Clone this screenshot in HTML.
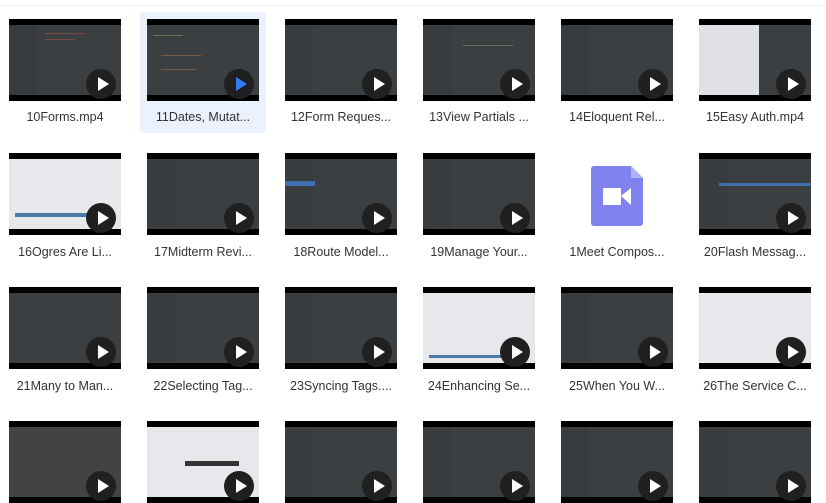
<!DOCTYPE html>
<html><head><meta charset="utf-8"><style>
body{margin:0;width:826px;height:497px;overflow:hidden;background:#fff;font-family:"Liberation Sans","Noto Sans CJK SC",sans-serif;position:relative}
.line{position:absolute;left:0;top:5px;width:826px;height:1px;background:#eef0f3}
.sel{position:absolute;left:140px;top:12px;width:126px;height:121px;background:#ebf1fd;border-radius:3px}
.t{position:absolute;width:112px;height:82px;background:#000;overflow:hidden}
.c{position:absolute;left:0;top:6px;width:112px;height:70px;background:#3c3f41}
.c.side:before{content:"";position:absolute;left:0;top:0;width:28px;height:70px;background:#393c3e}
.c .ln{position:absolute;height:1px;background:#6a6f5a}
.l{background:#e6e8eb}
.p{position:absolute;left:77px;top:50px;width:30px;height:30px;border-radius:50%;background:#202020}
.p:after{content:"";position:absolute;left:12px;top:8px;border-left:11px solid #fff;border-top:7px solid transparent;border-bottom:7px solid transparent}
.p.b:after{border-left-color:#2f7cf6}
.lab{position:absolute;width:126px;text-align:center;font-size:12.5px;color:#333;white-space:nowrap}
</style></head><body>
<div class="line"></div>
<div class="sel"></div>

<div class="t" style="left:9px;top:19px"><div class="c side"><div class="ln" style="left:36px;top:8px;width:40px;background:#7a4a40"></div><div class="ln" style="left:36px;top:14px;width:30px;background:#7a4a40"></div></div><div class="p"></div></div>
<div class="t" style="left:147px;top:19px"><div class="c"><div class="ln" style="left:6px;top:10px;width:30px"></div><div class="ln" style="left:14px;top:30px;width:40px;background:#7a5a40"></div><div class="ln" style="left:14px;top:44px;width:36px;background:#7a5a40"></div></div><div class="p b"></div></div>
<div class="t" style="left:285px;top:19px"><div class="c side"></div><div class="p"></div></div>
<div class="t" style="left:423px;top:19px"><div class="c side"><div class="ln" style="left:40px;top:20px;width:50px"></div></div><div class="p"></div></div>
<div class="t" style="left:561px;top:19px"><div class="c side"></div><div class="p"></div></div>
<div class="t" style="left:699px;top:19px"><div class="c" style="background:#dfe1e4"><div style="position:absolute;left:60px;top:0;width:52px;height:70px;background:#3c3f41"></div></div><div class="p"></div></div>
<div class="lab" style="left:2px;top:110px">10Forms.mp4</div>
<div class="lab" style="left:140px;top:110px">11Dates, Mutat...</div>
<div class="lab" style="left:278px;top:110px">12Form Reques...</div>
<div class="lab" style="left:416px;top:110px">13View Partials ...</div>
<div class="lab" style="left:554px;top:110px">14Eloquent Rel...</div>
<div class="lab" style="left:692px;top:110px">15Easy Auth.mp4</div>

<div class="t" style="left:9px;top:153px"><div class="c l"><div style="position:absolute;left:6px;top:54px;width:100px;height:4px;background:#4a79a8"></div></div><div class="p"></div></div>
<div class="t" style="left:147px;top:153px"><div class="c side"></div><div class="p"></div></div>
<div class="t" style="left:285px;top:153px"><div class="c side"><div style="position:absolute;left:0;top:22px;width:30px;height:5px;background:#3e6db0"></div></div><div class="p"></div></div>
<div class="t" style="left:423px;top:153px"><div class="c side"></div><div class="p"></div></div>
<svg style="position:absolute;left:591px;top:166px" width="52" height="60" viewBox="0 0 52 60"><path d="M3 0H40L52 12V57a3 3 0 0 1-3 3H3a3 3 0 0 1-3-3V3a3 3 0 0 1 3-3z" fill="#8083ee"/><path d="M40 0V12H52z" fill="#b0b4f6"/><rect x="12" y="22" width="18" height="17" rx="1" fill="#fff"/><path d="M30 30L40 22V39z" fill="#fff"/></svg>
<div class="t" style="left:699px;top:153px"><div class="c side"><div style="position:absolute;left:20px;top:24px;width:92px;height:3px;background:#3e6db0"></div></div><div class="p"></div></div>
<div class="lab" style="left:2px;top:245px">16Ogres Are Li...</div>
<div class="lab" style="left:140px;top:245px">17Midterm Revi...</div>
<div class="lab" style="left:278px;top:245px">18Route Model...</div>
<div class="lab" style="left:416px;top:245px">19Manage Your...</div>
<div class="lab" style="left:554px;top:245px">1Meet Compos...</div>
<div class="lab" style="left:692px;top:245px">20Flash Messag...</div>

<div class="t" style="left:9px;top:287px"><div class="c"></div><div class="p"></div></div>
<div class="t" style="left:147px;top:287px"><div class="c side"></div><div class="p"></div></div>
<div class="t" style="left:285px;top:287px"><div class="c side"></div><div class="p"></div></div>
<div class="t" style="left:423px;top:287px"><div class="c l"><div style="position:absolute;left:6px;top:62px;width:100px;height:3px;background:#4a79a8"></div></div><div class="p"></div></div>
<div class="t" style="left:561px;top:287px"><div class="c side"></div><div class="p"></div></div>
<div class="t" style="left:699px;top:287px"><div class="c l"></div><div class="p"></div></div>
<div class="lab" style="left:2px;top:379px">21Many to Man...</div>
<div class="lab" style="left:140px;top:379px">22Selecting Tag...</div>
<div class="lab" style="left:278px;top:379px">23Syncing Tags....</div>
<div class="lab" style="left:416px;top:379px">24Enhancing Se...</div>
<div class="lab" style="left:554px;top:379px">25When You W...</div>
<div class="lab" style="left:692px;top:379px">26The Service C...</div>

<div class="t" style="left:9px;top:421px"><div class="c" style="background:#424344"></div><div class="p"></div></div>
<div class="t" style="left:147px;top:421px"><div class="c l"><div style="position:absolute;left:38px;top:34px;width:54px;height:5px;background:#333"></div></div><div class="p"></div></div>
<div class="t" style="left:285px;top:421px"><div class="c side"></div><div class="p"></div></div>
<div class="t" style="left:423px;top:421px"><div class="c side"></div><div class="p"></div></div>
<div class="t" style="left:561px;top:421px"><div class="c side"></div><div class="p"></div></div>
<div class="t" style="left:699px;top:421px"><div class="c side"></div><div class="p"></div></div>
</body></html>
